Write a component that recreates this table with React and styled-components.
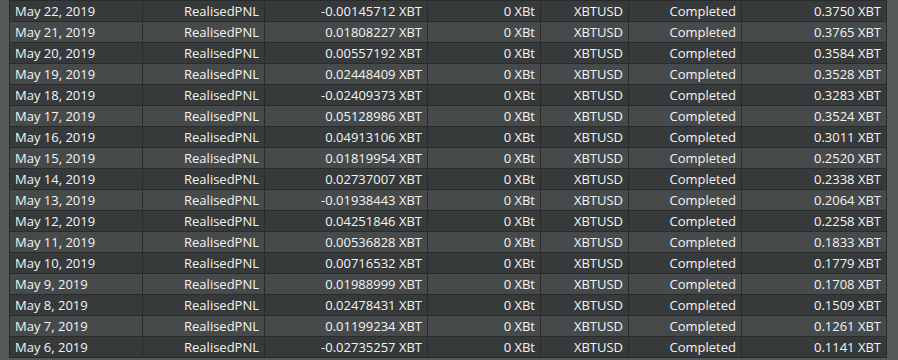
import React from 'react'
import styled, { createGlobalStyle } from 'styled-components'

const GlobalStyle = createGlobalStyle`
  html, body {
    margin: 0;
    padding: 0;
  }
  body {
    background-color: #535a58;
    background-image: radial-gradient(rgba(0, 0, 0, 0.07) 1px, transparent 1px);
    background-size: 3px 3px;
    font-family: "Open Sans", "DejaVu Sans", sans-serif;
    height: 360px;
    overflow: hidden;
  }
`

const Wrapper = styled.div`
  padding-left: 9px;
`

const Table = styled.div`
  background: #2a2c2c;
  border: 1px solid #2a2c2c;
  border-top-width: 1px;
  display: grid;
  gap: 1px;
  width: 876px;
`

const Row = styled.div`
  display: grid;
  gap: 1px;
  grid-template-columns: 132px 121px 162px 112px 87px 112px 144px;

  & > div {
    background: ${p => (p.$alt ? 'rgba(72, 76, 76, 0.96)' : 'rgba(56, 59, 59, 0.96)')};
  }
`

const Cell = styled.div`
  color: #f4f4f4;
  font-size: 13px;
  height: 20px;
  line-height: 21px;
  overflow: hidden;
  padding: 0 5px;
  text-align: ${p => (p.$left ? 'left' : 'right')};
  white-space: nowrap;
`

const rows = [
  ['May 22, 2019', '-0.00145712', '0.3750'],
  ['May 21, 2019', '0.01808227', '0.3765'],
  ['May 20, 2019', '0.00557192', '0.3584'],
  ['May 19, 2019', '0.02448409', '0.3528'],
  ['May 18, 2019', '-0.02409373', '0.3283'],
  ['May 17, 2019', '0.05128986', '0.3524'],
  ['May 16, 2019', '0.04913106', '0.3011'],
  ['May 15, 2019', '0.01819954', '0.2520'],
  ['May 14, 2019', '0.02737007', '0.2338'],
  ['May 13, 2019', '-0.01938443', '0.2064'],
  ['May 12, 2019', '0.04251846', '0.2258'],
  ['May 11, 2019', '0.00536828', '0.1833'],
  ['May 10, 2019', '0.00716532', '0.1779'],
  ['May 9, 2019', '0.01988999', '0.1708'],
  ['May 8, 2019', '0.02478431', '0.1509'],
  ['May 7, 2019', '0.01199234', '0.1261'],
  ['May 6, 2019', '-0.02735257', '0.1141'],
]

export default function App() {
  return (
    <>
      <GlobalStyle />
      <Wrapper>
        <Table>
          {rows.map(([date, amount, balance], i) => (
            <Row key={date} $alt={i % 2 === 1}>
              <Cell $left>{date}</Cell>
              <Cell>RealisedPNL</Cell>
              <Cell>{amount} XBT</Cell>
              <Cell>0 XBt</Cell>
              <Cell>XBTUSD</Cell>
              <Cell>Completed</Cell>
              <Cell>{balance} XBT</Cell>
            </Row>
          ))}
        </Table>
      </Wrapper>
    </>
  )
}
